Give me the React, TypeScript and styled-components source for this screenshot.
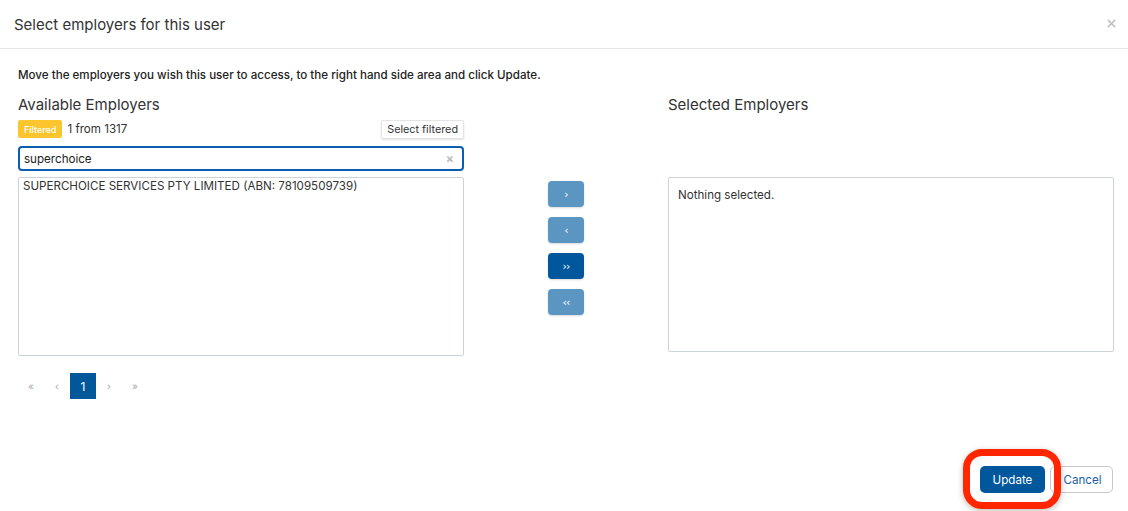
import React from 'react';
import styled, { createGlobalStyle } from 'styled-components';

const GlobalStyle = createGlobalStyle`
    html, body {
        margin: 0;
        padding: 0;
        background: #fff;
        font-family: Inter, "Noto Sans", sans-serif;
        color: #333;
    }
    * { box-sizing: border-box; }
`;

const Modal = styled.div`
    width: 1128px;
    height: 511px;
    display: flex;
    flex-direction: column;
    background: #fff;
`;

const Header = styled.div`
    height: 49px;
    display: flex;
    align-items: center;
    justify-content: space-between;
    padding: 0 10px 0 14px;
    border-bottom: 1px solid #e6e6e6;
`;

const Title = styled.h4`
    margin: 0;
    font-size: 15px;
    font-weight: 400;
    color: #333;
`;

const Close = styled.button`
    border: none;
    background: none;
    padding: 0;
    width: 14px;
    height: 14px;
    display: flex;
    align-items: center;
    justify-content: center;
    cursor: pointer;
    margin-bottom: 2px;
`;

const Body = styled.div`
    flex: 1;
    padding: 19px 14px 0 18px;
`;

const Intro = styled.p`
    margin: 0 0 14px;
    font-size: 11.6px;
    font-weight: 500;
    color: #222;
`;

const Columns = styled.div`
    display: grid;
    grid-template-columns: 446px 1fr 446px;
    grid-template-rows: auto auto auto;
`;

const Heading = styled.h5`
    margin: 0;
    font-size: 15px;
    font-weight: 400;
    color: #333;
    line-height: 18px;
`;

const CountRow = styled.div`
    display: flex;
    align-items: center;
    justify-content: space-between;
    margin-top: 5px;
    height: 20px;
`;

const CountInfo = styled.div`
    display: flex;
    align-items: center;
    gap: 5px;
    font-size: 11.6px;
    color: #333;
`;

const Badge = styled.span`
    display: inline-flex;
    align-items: center;
    height: 18px;
    padding: 0 6px;
    border-radius: 2px;
    background: #fbc52d;
    color: #fff;
    font-size: 9px;
    font-weight: 500;
`;

const SmallButton = styled.button`
    height: 19px;
    padding: 0 5px;
    border: 1px solid #e4e4e4;
    border-radius: 2px;
    background: #fff;
    box-shadow: 0 1px 2px rgba(0, 0, 0, 0.12);
    font-family: inherit;
    font-size: 10.8px;
    color: #333;
    margin-top: 1px;
`;

const SearchBox = styled.div`
    margin-top: 7px;
    height: 25px;
    border: 2px solid #0b5cb5;
    border-radius: 4px;
    display: flex;
    align-items: center;
    padding: 0 8px 0 4px;
    font-size: 11.6px;
    color: #222;
`;

const SearchText = styled.span`
    flex: 1;
`;

const ClearMark = styled.span`
    color: #bbb;
    font-size: 12px;
    font-weight: 700;
`;

const ListBox = styled.div<{ $tight?: boolean }>`
    margin-top: 6px;
    height: ${p => (p.$tight ? 179 : 175)}px;
    border: 1px solid #ccd3db;
    border-radius: 2px;
    padding: ${p => (p.$tight ? '1px 4px' : '10px 9px')};
    font-size: 11.6px;
    color: #333;
`;

const Mover = styled.div`
    display: flex;
    flex-direction: column;
    align-items: center;
    gap: 10px;
    padding-top: 10px;
`;

const MoveButton = styled.button<{ $active?: boolean }>`
    width: 36px;
    height: 26px;
    border: none;
    border-radius: 4px;
    background: ${p => (p.$active ? '#00579b' : '#5b95c2')};
    color: #fff;
    font-size: 11px;
    font-family: "DejaVu Sans", sans-serif;
    box-shadow: 0 1px 2px rgba(0, 0, 0, 0.15);
    display: flex;
    align-items: center;
    justify-content: center;
    letter-spacing: -1px;
`;

const Pager = styled.ul`
    list-style: none;
    margin: 17px 0 0;
    padding: 0;
    display: flex;
    align-items: center;
`;

const PageItem = styled.li<{ $current?: boolean }>`
    width: 26px;
    height: 26px;
    display: flex;
    align-items: center;
    justify-content: center;
    font-size: ${p => (p.$current ? '12px' : '10px')};
    color: ${p => (p.$current ? '#fff' : '#aaa')};
    background: ${p => (p.$current ? '#00589b' : 'transparent')};
`;

const Footer = styled.div`
    display: flex;
    justify-content: flex-end;
    align-items: center;
    gap: 5px;
    padding: 0 15px 18px 0;
`;

const Highlight = styled.div`
    position: relative;
    &::after {
        content: '';
        position: absolute;
        left: -17px;
        right: -16px;
        top: -17px;
        bottom: -16px;
        border: 7px solid #ff2600;
        border-radius: 19px;
        box-shadow: 0 2px 6px rgba(0, 0, 0, 0.25);
        pointer-events: none;
    }
`;

const PrimaryButton = styled.button`
    width: 65px;
    height: 27px;
    border: none;
    border-radius: 5px;
    background: #00579b;
    color: #fff;
    font-family: inherit;
    font-size: 11.6px;
`;

const SecondaryButton = styled.button`
    width: 63px;
    height: 27px;
    border: 1px solid #c9c9c9;
    border-radius: 5px;
    background: #fff;
    color: #1b5fa6;
    font-family: inherit;
    font-size: 11.6px;
    padding-left: 8px;
`;

const Spacer = styled.div``;

const App = () => (
    <Modal>
        <GlobalStyle />
        <Header>
            <Title>Select employers for this user</Title>
            <Close aria-label="Close">
                <svg width="9" height="9" viewBox="0 0 10 10">
                    <path d="M1 1L9 9M9 1L1 9" stroke="#c4c4c4" strokeWidth="2" />
                </svg>
            </Close>
        </Header>
        <Body>
            <Intro>Move the employers you wish this user to access, to the right hand side area and click Update.</Intro>
            <Columns>
                <div>
                    <Heading>Available Employers</Heading>
                    <CountRow>
                        <CountInfo>
                            <Badge>Filtered</Badge>
                            <span>1 from 1317</span>
                        </CountInfo>
                        <SmallButton>Select filtered</SmallButton>
                    </CountRow>
                    <SearchBox>
                        <SearchText>superchoice</SearchText>
                        <ClearMark>×</ClearMark>
                    </SearchBox>
                </div>
                <Spacer />
                <div>
                    <Heading>Selected Employers</Heading>
                </div>

                <ListBox $tight>SUPERCHOICE SERVICES PTY LIMITED (ABN: 78109509739)</ListBox>
                <Mover>
                    <MoveButton>›</MoveButton>
                    <MoveButton>‹</MoveButton>
                    <MoveButton $active>››</MoveButton>
                    <MoveButton>‹‹</MoveButton>
                </Mover>
                <ListBox>Nothing selected.</ListBox>

                <Pager>
                    <PageItem>«</PageItem>
                    <PageItem>‹</PageItem>
                    <PageItem $current>1</PageItem>
                    <PageItem>›</PageItem>
                    <PageItem>»</PageItem>
                </Pager>
            </Columns>
        </Body>
        <Footer>
            <Highlight>
                <PrimaryButton>Update</PrimaryButton>
            </Highlight>
            <SecondaryButton>Cancel</SecondaryButton>
        </Footer>
    </Modal>
);

export default App;
